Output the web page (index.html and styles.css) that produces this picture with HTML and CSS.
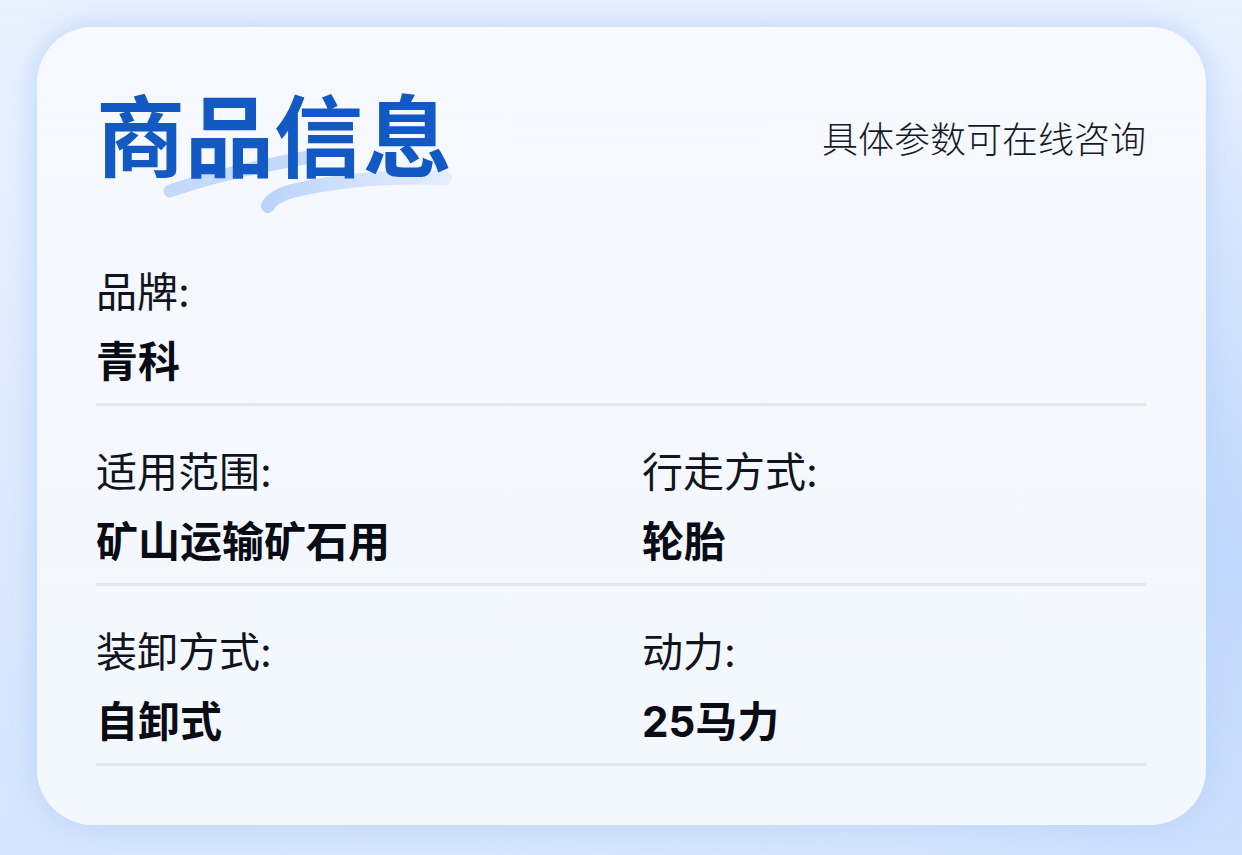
FILE: index.html
```html
<!DOCTYPE html>
<html lang="zh-CN">
<head>
<meta charset="utf-8">
<title>商品信息</title>
<link rel="stylesheet" href="styles.css">
</head>
<body>
<div class="stage">
  <section class="card">
    <header class="card-head">
      <div class="title-wrap">
        <svg class="brush" width="320" height="80" viewBox="0 0 320 80" aria-hidden="true">
          <defs>
            <linearGradient id="g2" x1="0" y1="0" x2="1" y2="0">
              <stop offset="0" stop-color="#b9d4fb"/>
              <stop offset="0.45" stop-color="#cfe1fd"/>
              <stop offset="1" stop-color="#e2edfd"/>
            </linearGradient>
          </defs>
          <path d="M10,46 Q60,28 150,12" stroke="#c3dafb" stroke-width="13" fill="none" stroke-linecap="round"/>
          <path d="M108,61 Q112,52 132,46 Q200,30 285,33" stroke="url(#g2)" stroke-width="14" fill="none" stroke-linecap="round"/>
        </svg>
        <h1 class="title">商品信息</h1>
      </div>
      <p class="hint">具体参数可在线咨询</p>
    </header>

    <div class="row">
      <div class="cell">
        <div class="label">品牌:</div>
        <div class="value">青科</div>
      </div>
    </div>
    <div class="row">
      <div class="cell">
        <div class="label">适用范围:</div>
        <div class="value">矿山运输矿石用</div>
      </div>
      <div class="cell">
        <div class="label">行走方式:</div>
        <div class="value">轮胎</div>
      </div>
    </div>
    <div class="row">
      <div class="cell">
        <div class="label">装卸方式:</div>
        <div class="value">自卸式</div>
      </div>
      <div class="cell">
        <div class="label">动力:</div>
        <div class="value">25马力</div>
      </div>
    </div>
  </section>
</div>
</body>
</html>
```

FILE: styles.css
```css
* { box-sizing: border-box; }

html, body {
  margin: 0;
  padding: 0;
  width: 1242px;
  height: 855px;
  overflow: hidden;
}

body {
  font-family: "Inter", "Noto Sans CJK SC", sans-serif;
  color: #0c0e17;
  background:
    radial-gradient(ellipse 420px 520px at 1242px 560px, #c2d8fc 0%, rgba(194,216,252,0) 100%),
    radial-gradient(ellipse 700px 260px at 300px 855px, #d6e6fd 0%, rgba(214,230,253,0) 100%),
    linear-gradient(180deg, #e8f1fe 0%, #dde9fd 60%, #d4e4fd 100%);
}

.stage {
  padding: 27px 36px 30px 37px;
}

.card {
  width: 1169px;
  height: 798px;
  border-radius: 56px;
  background: linear-gradient(180deg, #f6f9ff 0%, #f3f7fe 100%);
  box-shadow: 0 0 24px 4px rgba(186, 211, 251, 0.75);
  padding: 55px 60px 0 59px;
}

.card-head {
  display: flex;
  justify-content: space-between;
  align-items: center;
  margin-bottom: 44px;
}

.title-wrap {
  position: relative;
}

.brush {
  position: absolute;
  left: 64px;
  top: 63px;
}

.title {
  position: relative;
  margin: 0;
  font-family: "Noto Sans CJK SC", sans-serif;
  font-size: 89px;
  line-height: 100px;
  font-weight: 700;
  color: #1259c4;
  letter-spacing: 0;
}

.hint {
  margin: 10px 0 0 0;
  font-family: "Noto Sans CJK SC", sans-serif;
  font-size: 36px;
  font-weight: 300;
  line-height: 48px;
  color: #161a26;
}

.row {
  display: grid;
  grid-template-columns: 504px 504px;
  column-gap: 42px;
  padding: 42px 0 17px 0;
  border-bottom: 3px solid #e4e7ec;
}

.label {
  font-size: 41px;
  line-height: 48px;
  font-weight: 400;
  color: #12141d;
}

.value {
  margin-top: 22px;
  font-size: 42px;
  line-height: 48px;
  font-weight: 700;
  color: #0a0c15;
}
```
